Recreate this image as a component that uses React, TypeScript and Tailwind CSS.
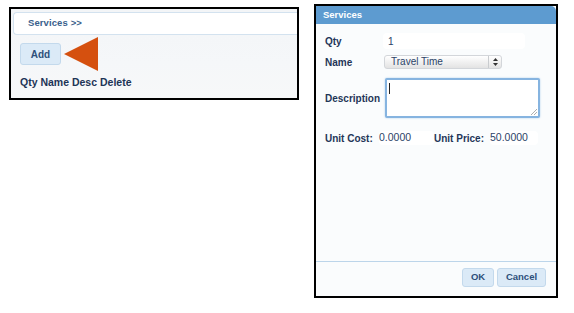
export default function App() {
  return (
    <div className="w-[574px] h-[313px] bg-white flex items-start font-['Liberation_Sans',Arial,sans-serif] text-[#1f3658]">
      <LeftPanel />
      <ServiceDialog />
    </div>
  )
}

function LeftPanel() {
  return (
    <div className="ml-[9px] mt-[7px] w-[290px] h-[93px] border-2 border-black overflow-hidden bg-[linear-gradient(180deg,#f3f5f7_0%,#f5f7f9_60%,#f7f8f9_100%)] pt-[3px] pl-[2px]">
      <div className="h-[23px] bg-white border border-r-0 border-[#d3e2ef] rounded-l-[4px] flex items-center pl-[14px] text-[9.5px] font-semibold text-[#3a5f8c] tracking-[0.1px]">
        Services &gt;&gt;
      </div>
      <div className="mt-[2px] ml-[7px] flex items-center h-[34px]">
        <button className="w-[41px] h-[22px] rounded-[3px] bg-[#dbeaf7] border border-[#c3d9ec] text-[10px] font-bold text-[#2d4f7a]">
          Add
        </button>
        <svg width="35" height="34" viewBox="0 0 35 34" className="ml-[3px]">
          <polygon points="0,17 34,0 34,34" fill="#d5500f" />
        </svg>
      </div>
      <div className="mt-[5px] ml-[7px] text-[10.5px] font-bold text-[#1d3456] leading-[12px]">Qty Name Desc Delete</div>
    </div>
  )
}

function ServiceDialog() {
  return (
    <div className="ml-[15px] mt-[4px] w-[244px] h-[294px] border-2 border-black flex flex-col bg-[#fafcfd]">
      <div className="h-[18px] bg-[#5d9bd0] rounded-tr-[5px] flex items-center pl-[7px] text-[9.5px] font-bold text-white">
        Services
      </div>
      <div className="flex-1 flex flex-col pl-[9px] text-[10px]">
        <div className="mt-[9px] flex items-center h-[16px]">
          <span className="w-[58px] font-bold">Qty</span>
          <span className="w-[142px] h-[16px] rounded-[4px] bg-white flex items-center pl-[5px] text-[#2c4468]">1</span>
        </div>
        <div className="mt-[6px] flex items-center h-[14px]">
          <span className="w-[59px] font-bold">Name</span>
          <div className="w-[118px] h-[14px] rounded-[3px] border border-[#d3d6da] bg-[linear-gradient(180deg,#ffffff_0%,#f1f1f1_50%,#e3e3e3_100%)] flex items-center">
            <span className="flex-1 pl-[6px] text-[#2c4468] leading-[12px]">Travel Time</span>
            <span className="w-[13px] h-full border-l border-[#c9cccf] flex items-center justify-center">
              <svg width="5" height="8" viewBox="0 0 5 8">
                <polygon points="2.5,0 5,3 0,3" fill="#333" />
                <polygon points="0,5 5,5 2.5,8" fill="#333" />
              </svg>
            </span>
          </div>
        </div>
        <div className="mt-[9px] flex items-center h-[40px]">
          <span className="w-[60px] font-bold">Description</span>
          <div className="relative w-[155px] h-[40px] border-2 border-[#86b4e0] rounded-[2px] bg-white shadow-[0_0_2px_#a9cbeb] pl-[2px] pt-[3px]">
            <span className="block w-px h-[11px] bg-[#222]" />
            <svg width="6" height="6" viewBox="0 0 6 6" className="absolute right-[1px] bottom-[1px]">
              <line x1="6" y1="0" x2="0" y2="6" stroke="#9a9a9a" strokeWidth="0.8" />
              <line x1="6" y1="3" x2="3" y2="6" stroke="#9a9a9a" strokeWidth="0.8" />
            </svg>
          </div>
        </div>
        <div className="mt-[13px] flex items-center h-[14px]">
          <span className="w-[54px] font-bold">Unit Cost:</span>
          <span className="w-[55px] h-[14px] rounded-[4px] bg-white flex items-center text-[#2c4468] text-[10.5px]">0.0000</span>
          <span className="w-[56px] font-bold">Unit Price:</span>
          <span className="w-[48px] h-[14px] rounded-[4px] bg-white flex items-center text-[#2c4468] text-[10.5px]">50.0000</span>
        </div>
        <div className="flex-1" />
      </div>
      <div className="border-t border-[#bcd5ea] bg-[#fafcfd] flex justify-end gap-[3px] pt-[6px] pb-[9px] pr-[10px]">
        <button className="w-[32px] h-[19px] rounded-[3px] bg-[#dbeaf7] border border-[#c3d9ec] text-[9.5px] font-bold text-[#2d4f7a]">
          OK
        </button>
        <button className="w-[49px] h-[19px] rounded-[3px] bg-[#dbeaf7] border border-[#c3d9ec] text-[9.5px] font-bold text-[#2d4f7a]">
          Cancel
        </button>
      </div>
    </div>
  )
}
